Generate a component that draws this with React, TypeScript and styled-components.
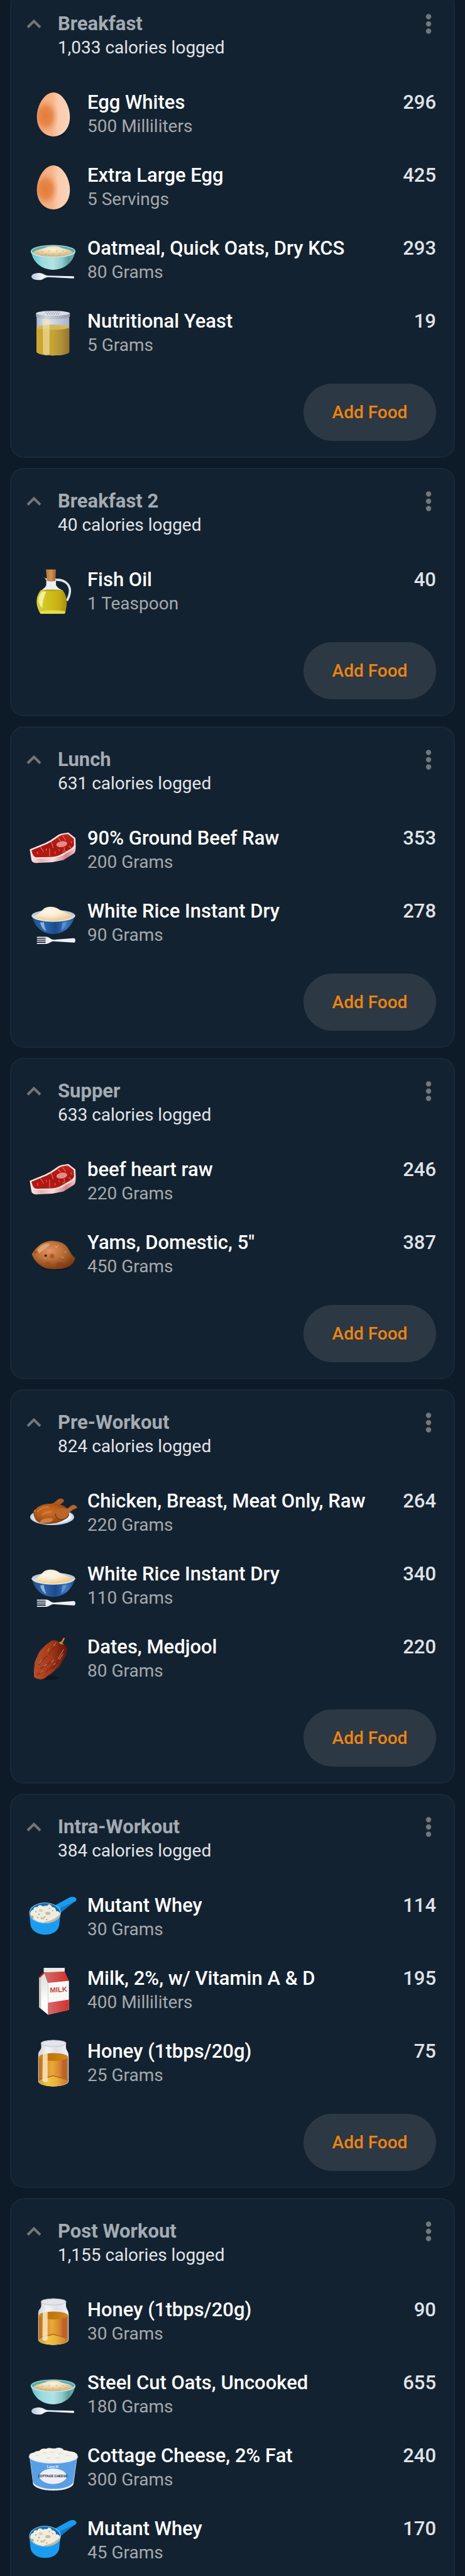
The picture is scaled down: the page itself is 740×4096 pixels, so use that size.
import React from "react";
import styled, { createGlobalStyle } from "styled-components";

const GlobalStyle = createGlobalStyle`
  *, *::before, *::after { box-sizing: border-box; }
  body {
    margin: 0;
    background: #0d1a28;
    color: #ffffff;
    font-family: Roboto, "Liberation Sans", sans-serif;
    font-size: 28px;
    line-height: 38px;
  }
`;

/* The diary is scrolled, so the first card starts just above the window. */
const Diary = styled.main`
  display: flex;
  flex-direction: column;
  gap: 16px;
  margin-top: -15px;
  padding: 0 16px;
`;

const Card = styled.section<{ $cut: boolean }>`
  display: flex;
  flex-direction: column;
  padding: 32px 0 ${p => (p.$cut ? 18 : 25)}px;
  background: #132230;
  border: 2px solid #182937;
  border-bottom-width: ${p => (p.$cut ? 0 : 2)}px;
  border-radius: ${p => (p.$cut ? "22px 22px 0 0" : "22px")};
`;

const CardHeader = styled.header`
  display: flex;
  align-items: flex-start;
  gap: 26px;
  padding: 0 35px 0 24px;
`;

const IconButton = styled.button`
  display: flex;
  align-items: center;
  height: 38px;
  padding: 0;
  border: 0;
  background: none;
  color: #72777a;
  cursor: pointer;
`;

const Heading = styled.div`
  flex: 1;
  min-width: 0;
`;

const MealTitle = styled.h2`
  margin: 0;
  font-size: 31px;
  font-weight: 700;
  color: #a3abb3;
`;

const MealTotal = styled.p`
  margin: 0;
  color: #e1e5ea;
`;

const FoodList = styled.ul`
  display: flex;
  flex-direction: column;
  gap: 40px;
  margin: 49px 0 0;
  padding: 0 28px 0 31px;
  list-style: none;
`;

const FoodRow = styled.li`
  display: flex;
  align-items: flex-start;
  gap: 18px;
  height: 76px;
`;

const FoodIcon = styled.svg`
  flex: none;
  align-self: center;
  width: 72px;
  height: 72px;
  overflow: visible;
`;

const FoodText = styled.div`
  flex: 1;
  min-width: 0;
`;

const FoodName = styled.h3`
  margin: 0;
  font-size: 31px;
  font-weight: 500;
`;

const FoodAmount = styled.p`
  margin: 0;
  color: #a5a9ad;
`;

const FoodCalories = styled.span`
  font-size: 31px;
  font-weight: 500;
  color: #dfe3e9;
`;

const AddFoodButton = styled.button`
  align-self: flex-end;
  width: 211px;
  height: 91px;
  margin: 42px 28px 0 0;
  padding: 0;
  border: 0;
  border-radius: 46px;
  background: #2c3843;
  color: #f08412;
  font-family: inherit;
  font-size: 28px;
  font-weight: 500;
  line-height: 38px;
  cursor: pointer;
`;

const SharedDefs = styled.svg`
  display: block;
  width: 0;
  height: 0;
`;

type Stop = [number, string, number?];

const Linear = ({ id, stops, down }: { id: string; stops: Stop[]; down?: boolean }) => (
  <linearGradient id={id} x1="0" y1="0" x2={down ? "0" : "1"} y2={down ? "1" : "0"}>
    {stops.map(([at, color, opacity = 1]) => (
      <stop key={at} offset={at} stopColor={color} stopOpacity={opacity} />
    ))}
  </linearGradient>
);

const Radial = ({ id, cx, cy, r, stops }: { id: string; cx: number; cy: number; r: number; stops: Stop[] }) => (
  <radialGradient id={id} cx={cx} cy={cy} r={r}>
    {stops.map(([at, color, opacity = 1]) => (
      <stop key={at} offset={at} stopColor={color} stopOpacity={opacity} />
    ))}
  </radialGradient>
);

const Gradients = () => (
  <SharedDefs aria-hidden="true">
    <defs>
      <Linear id="eggBase" stops={[[0, "#f4a877"], [0.45, "#f6b488"], [0.65, "#facbae"], [1, "#fbd3ba"]]} />
      <Radial id="eggShade" cx={0.26} cy={0.54} r={0.4} stops={[[0, "#e27c36"], [0.5, "#e58445", 0.9], [1, "#f2a271", 0]]} />
      <Linear id="bowlTeal" stops={[[0, "#5fc3cf"], [0.25, "#9adbe0"], [0.5, "#b4e2e4"], [0.7, "#8fcccd"], [0.85, "#5b9f9d"], [1, "#6db3b3"]]} />
      <Radial id="oats" cx={0.5} cy={0.3} r={0.6} stops={[[0, "#fbf3d8"], [0.45, "#f1dfb8"], [1, "#d6b98a"]]} />
      <Linear id="silver" stops={[[0, "#b9c6dc"], [0.25, "#f2f6fc"], [0.5, "#dfe6f3"], [1, "#f4f6fb"]]} />
      <Linear id="lid" stops={[[0, "#9ba3b0"], [0.3, "#d0d4dc"], [1, "#9298a3"]]} />
      <Linear id="glass" stops={[[0, "#a8b7d0"], [0.3, "#dfe6f2"], [1, "#a9b4cb"]]} />
      <Linear id="yeast" stops={[[0, "#cfa72c"], [0.5, "#c4a433"], [0.75, "#b0913a"], [1, "#98742a"]]} />
      <Linear id="oil" stops={[[0, "#d6ce3a"], [0.4, "#d0c01c"], [0.75, "#c5ad12"], [1, "#a48f12"]]} />
      <Linear id="cork" stops={[[0, "#b37538"], [0.5, "#d29456"], [1, "#9c5f2a"]]} />
      <Linear id="meat" down stops={[[0, "#c0241c"], [0.5, "#ab1810"], [1, "#b31a12"]]} />
      <Linear id="fat" stops={[[0, "#fbeaea"], [0.25, "#e6b3b3"], [0.5, "#f6dcdc"], [0.8, "#d08489"], [1, "#f3c9cb"]]} />
      <Linear id="bowlBlue" stops={[[0, "#1e4f8c"], [0.3, "#2d67ab"], [0.55, "#1b4a8a"], [0.8, "#3a76bf"], [1, "#1f5192"]]} />
      <Radial id="rice" cx={0.4} cy={0.35} r={0.65} stops={[[0, "#fbf6ee"], [0.45, "#f9ecd2"], [1, "#efc987"]]} />
      <Radial id="yam" cx={0.4} cy={0.35} r={0.65} stops={[[0, "#e2955f"], [0.5, "#bb6e36"], [1, "#7d3d12"]]} />
      <Radial id="roast" cx={0.42} cy={0.4} r={0.6} stops={[[0, "#cb6f28"], [0.5, "#b85c1b"], [1, "#8a4314"]]} />
      <Linear id="date" stops={[[0, "#b84e28"], [0.5, "#a43a1a"], [1, "#5e150b"]]} />
      <Linear id="carton" stops={[[0, "#d66b6c"], [1, "#d2302b"]]} />
      <Linear id="cartonSide" down stops={[[0, "#d9dcd8"], [0.6, "#fafbfa"], [1, "#ffffff"]]} />
      <Linear id="honey" stops={[[0, "#bb6a1a"], [0.2, "#d98f28"], [0.45, "#e9a83a"], [0.7, "#d58a2c"], [0.85, "#bf5c33"], [1, "#b5702a"]]} />
      <Linear id="honeyTop" stops={[[0, "#cf8a14"], [0.4, "#c27609"], [1, "#cd8a20"]]} />
      <Linear id="honeyBase" stops={[[0, "#d99a2c"], [0.3, "#f3c444"], [0.6, "#e9b03c"], [1, "#c4752c"]]} />
      <Linear id="jar" stops={[[0, "#cfd2dc"], [0.3, "#f3f3f6"], [0.6, "#dfe0e8"], [1, "#f1f1f5"]]} />
    </defs>
  </SharedDefs>
);

const eggShape = "M70 2C98 2 121 42 121 78C121 112 100 138 70 138C40 138 19 112 19 78C19 42 42 2 70 2Z";

const Egg = () => (
  <>
    <ellipse cx="72" cy="130" rx="36" ry="9" fill="#0a141e" opacity="0.5" />
    <path d={eggShape} fill="url(#eggBase)" />
    <path d={eggShape} fill="url(#eggShade)" />
  </>
);

const Oatmeal = () => (
  <>
    <path d="M1 43C6 76 34 99 69 99C104 99 132 76 137 43Z" fill="url(#bowlTeal)" />
    <ellipse cx="69" cy="42" rx="68" ry="18" fill="#5fa9ad" stroke="#8fd3d8" strokeWidth="3" />
    <path d="M6 47C14 36 34 36 46 30C60 24 84 24 94 31C108 36 124 36 131 47C118 63 20 63 6 47Z" fill="url(#oats)" />
    <path d="M20 46l5 2m8-6l5 3m6 7l6-1m4-11l5 2m8 9l5-2m6-9l5 3m5 7l6-2m3-8l5 3m4 4l5-1M30 52l5 1m20 1l5 1m22 0l6-1" stroke="#c8a873" strokeWidth="2" />
    <path d="M1 43C12 66 126 66 137 43" fill="none" stroke="#bfe9ea" strokeWidth="3" />
    <path d="M2 120C2 113 14 109 26 109C38 109 42 117 54 117L132 119C135 119 135 126 132 126L54 122C42 122 38 131 26 131C12 131 2 127 2 120Z" fill="url(#silver)" />
  </>
);

const Shaker = () => (
  <>
    <path d="M18 18H119V128C112 142 25 142 18 128Z" fill="url(#glass)" />
    <path d="M18 51H119V128C112 142 25 142 18 128Z" fill="url(#yeast)" />
    <ellipse cx="68.5" cy="51" rx="50.5" ry="8" fill="#d2b85c" />
    <path d="M37 26H58V132C54 137 43 137 38 133Z" fill="#f3e4b0" opacity="0.6" />
    <path d="M16 8H121V18C114 29 23 29 16 18Z" fill="url(#lid)" />
    <ellipse cx="68.5" cy="8" rx="52.5" ry="7.5" fill="#d9dee8" />
    <path d="M46 5h44M50 10h40" stroke="#8d95a2" strokeWidth="3" strokeDasharray="3 4" />
  </>
);

const OilBottle = () => (
  <>
    <path d="M78 33C98 31 118 42 121 62C123 78 116 88 112 98" fill="none" stroke="#dfe4ea" strokeWidth="7" />
    <path d="M38 22L48 34V60H78V28H44Z" fill="#e6eaf0" />
    <path d="M50 36H76C76 56 86 58 98 66H32C42 58 50 54 50 36Z" fill="#eceff4" />
    <path d="M31 65H99C112 84 116 104 105 138H30C12 108 16 84 31 65Z" fill="url(#oil)" />
    <path d="M31 65Q65 72 99 65Q65 60 31 65Z" fill="#b9a914" />
    <path d="M36 68C20 86 20 106 36 120C36 104 40 84 48 70Z" fill="#f6f3ae" opacity="0.9" />
    <path d="M28 130Q65 124 108 130L105 138H30Z" fill="#ece35a" opacity="0.8" />
    <path d="M47 1H78L76 36C68 39 57 39 50 36Z" fill="url(#cork)" />
  </>
);

const Steak = () => (
  <>
    <path d="M-3 68L2 100C5 108 12 110 26 109L66 107L101 100L134 79C139 75 139 66 139 56Z" fill="url(#fat)" />
    <path d="M-3 67L29 54C52 46 66 36 86 22C96 17 106 17 116 15L138 32L139 56C137 64 131 67 124 71L97 87C84 93 70 94 57 95L14 96C4 94 0 84 -3 67Z" fill="#fce5e4" />
    <path d="M2 70L32 58C55 50 70 40 89 26C98 21 106 21 115 20L133 34L134 54C132 60 127 63 121 67L95 82C82 89 70 90 57 91L17 92C8 90 5 82 2 70Z" fill="url(#meat)" />
    <ellipse cx="96" cy="51" rx="17" ry="9" fill="#e58a86" transform="rotate(-10 96 51)" />
    <path d="M29 59C32 66 40 68 39 76M59 90C55 80 62 74 57 64M63 42C65 50 68 54 69 62M98 25C103 31 106 34 108 40M103 60C102 68 108 72 106 80M118 56L127 66M84 32L93 41M21 74v8M48 64v7M75 74v7M86 66l3 5M100 70v6M124 42l3 6" fill="none" stroke="#e87a6e" strokeWidth="2" />
  </>
);

const Rice = () => (
  <>
    <path d="M3 45C10 80 36 103 69 103C102 103 129 80 137 45Z" fill="url(#bowlBlue)" />
    <ellipse cx="70" cy="46" rx="67" ry="17" fill="#b7cbe0" />
    <path d="M6 50C20 44 30 36 38 27C48 17 70 17 82 24C98 34 122 42 133 48C118 68 24 68 6 50Z" fill="url(#rice)" />
    <path d="M3 46C12 70 126 70 137 46" fill="none" stroke="#e8eef4" strokeWidth="3" />
    <path d="M29 68L40 66C42 78 44 86 48 94C38 90 32 80 29 68Z" fill="#bcd3ec" opacity="0.7" />
    <path d="M98 68L110 66C108 78 102 88 94 93Z" fill="#6ba1de" opacity="0.7" />
    <path d="M19 112H48C58 113 60 120 70 121L132 116C140 115 140 131 132 130L70 126C60 127 58 133 48 134H19V131H46V127H19V124H46V121H19V118H46V115H19Z" fill="#eef0f6" />
  </>
);

const Yam = () => (
  <>
    <ellipse cx="75" cy="110" rx="42" ry="9" fill="#08121b" opacity="0.6" />
    <path d="M3 68C20 42 38 28 64 27C88 27 104 34 114 48C122 62 128 74 138 80C134 96 122 106 108 111C86 117 62 116 45 112C24 102 10 88 3 68Z" fill="url(#yam)" />
    <path d="M20 56C30 40 46 34 60 36C54 46 40 54 26 66Z" fill="#efc3a0" opacity="0.55" />
    <circle cx="66" cy="74" r="7" fill="#9a4520" opacity="0.6" />
    <ellipse cx="90" cy="101" rx="12" ry="8" fill="#8f3c18" opacity="0.65" />
    <ellipse cx="53" cy="98" rx="9" ry="7" fill="#a8481f" opacity="0.6" />
    <ellipse cx="14" cy="62" rx="6" ry="6" fill="#b0431b" opacity="0.6" />
    <circle cx="46" cy="73" r="4" fill="#4a2210" />
    <path d="M74 42l6 6l4-8M96 76l6 4M40 80l6 3M104 60l6 3" fill="none" stroke="#e8a878" strokeWidth="2" />
  </>
);

const Chicken = () => (
  <>
    <ellipse cx="66" cy="82" rx="68" ry="25" fill="#c9d8e8" />
    <ellipse cx="66" cy="81" rx="60" ry="20" fill="#eef3f8" />
    <path d="M60 42C76 40 80 28 88 26C98 22 104 28 102 35C96 38 92 44 84 50Z" fill="#a85c2a" />
    <path d="M8 68C14 54 30 44 48 42C72 38 98 42 108 52C122 62 122 78 104 90C86 102 60 105 34 102C18 98 8 86 8 68Z" fill="url(#roast)" />
    <path d="M76 72C78 56 94 52 112 56C122 52 124 44 133 44C138 46 143 48 143 54C134 58 126 60 119 70C116 86 104 90 92 90C82 88 76 82 76 72Z" fill="#b9652c" />
    <path d="M76 72C76 80 82 88 92 90C104 90 114 86 118 74" fill="none" stroke="#7d3c14" strokeWidth="3" />
    <path d="M28 98C32 88 48 84 66 86C72 90 66 96 58 98L30 102Z" fill="#cc8142" />
    <path d="M20 66C30 54 44 50 56 50M34 76C44 68 54 66 64 66" fill="none" stroke="#e29144" strokeWidth="4" opacity="0.6" />
    <path d="M8 62l8-2l-4 8z" fill="#b98142" />
  </>
);

const DateFruit = () => (
  <>
    <ellipse cx="56" cy="128" rx="30" ry="7" fill="#08121b" opacity="0.6" />
    <path d="M10 119C8 104 12 96 12 80C20 62 24 50 32 41C42 30 52 20 62 15C70 10 82 12 92 21C102 22 112 30 113 41C112 56 106 64 98 76C92 88 88 94 78 101C68 112 60 116 48 125C42 132 36 132 31 133C24 132 18 131 13 128C10 126 9 122 10 119Z" fill="url(#date)" />
    <path d="M90 17L98 20C102 16 102 10 106 6L102 4C98 8 98 12 94 16L86 18L92 24L102 25L98 20" fill="#c68a34" />
    <path d="M24 88C34 78 40 66 52 60M30 100C42 90 54 88 62 76M44 112C58 102 64 96 74 84M56 56C62 46 68 40 74 30M18 120C26 112 30 114 38 108M64 100C74 92 80 84 84 74" fill="none" stroke="#6b200f" strokeWidth="4" opacity="0.45" />
    <path d="M26 84l8-12M52 46l5-9M70 30l8-10M40 92l10-6M64 80l8-8M70 88l6-5M84 70l18-30M88 72l12-18M30 112l8-5" fill="none" stroke="#e79a80" strokeWidth="2" opacity="0.75" />
  </>
);

const Scoop = () => (
  <>
    <path d="M72 34L120 8C128 4 138 5 141 12C142 17 139 20 134 22L90 56Z" fill="#1a9bf0" />
    <path d="M92 40L134 21L92 56Z" fill="#1578c4" />
    <path d="M-4 56C-4 66 -2 76 -1 92C2 112 22 123 44 123C68 123 86 112 88 92L92 56Z" fill="#1c9cf0" />
    <ellipse cx="44" cy="56" rx="48" ry="31" fill="#136fae" stroke="#8fc9f0" strokeWidth="2" />
    <path d="M-2 58C0 50 2 46 8 46C8 38 14 36 20 38C24 30 32 30 37 36C42 32 48 34 52 33C56 26 62 30 66 38C74 36 78 44 78 50C86 50 90 54 91 58C88 76 68 86 44 86C20 86 2 76 -2 58Z" fill="#efece0" />
    <path d="M40 84C60 82 76 74 90 60C86 78 66 87 44 86Z" fill="#c9b795" />
    <ellipse cx="53" cy="57" rx="8" ry="5" fill="#c9bd9f" />
    <ellipse cx="31" cy="48" rx="6" ry="4" fill="#d6cdb3" />
    <ellipse cx="36" cy="72" rx="7" ry="4" fill="#d3c7a9" />
    <ellipse cx="5" cy="68" rx="4" ry="4" fill="#b9a77e" />
    <path d="M14 52h3M24 60h3M42 68h3M56 42h3M66 48h3M20 70h3M48 77h3" stroke="#8d7a52" strokeWidth="3" />
  </>
);

const Milk = () => (
  <>
    <path d="M40 14V0H105V13Z" fill="#e9ebe8" />
    <path d="M26 30L42 15L53 46V145L26 122Z" fill="url(#cartonSide)" />
    <path d="M26 30L32 26V127L26 122Z" fill="#cfcbbf" />
    <path d="M26 26L40 12L42 17L28 31Z" fill="#b41616" />
    <path d="M42 14L105 11L118 40L53 46Z" fill="url(#carton)" />
    <path d="M53 46L118 40V130L53 145Z" fill="#f8f8f7" />
    <path d="M53 108L118 98V130L53 145Z" fill="url(#carton)" />
    <text x="86" y="75" fill="#cf3f3f" fontFamily="Liberation Sans, Arial, sans-serif" fontSize="22" fontWeight="700" textAnchor="middle" transform="rotate(-4 86 68)">MILK</text>
  </>
);

const HoneyJar = () => (
  <>
    <path d="M32 8C32 20 34 22 28 30C24 34 23 38 23 46V127C32 146 108 146 117 127V46C117 38 114 34 112 30C108 22 109 20 109 8Z" fill="url(#jar)" />
    <ellipse cx="70.5" cy="8" rx="38.5" ry="10" fill="#e3e4ec" stroke="#c3c6d0" strokeWidth="2" />
    <path d="M25 50H115V127C104 145 36 145 25 127Z" fill="url(#honey)" />
    <ellipse cx="70" cy="50" rx="45" ry="12" fill="url(#honeyTop)" />
    <path d="M25 124C34 114 56 114 66 108C76 108 90 114 115 122V127C104 145 36 145 25 127Z" fill="url(#honeyBase)" />
    <path d="M25 122C40 112 56 114 68 108C80 110 96 116 115 121" fill="none" stroke="#b5691a" strokeWidth="3" />
    <path d="M37 38H52V122C52 130 37 130 36 122Z" fill="#fbeccd" opacity="0.8" />
  </>
);

const CottageCheese = () => (
  <>
    <path d="M-4 34L7 120C18 147 122 147 132 120L144 34Z" fill="#e9ecfb" />
    <path d="M-2 42L7 114C20 142 120 142 131 114L142 42Z" fill="#5a9fe3" />
    <path d="M-5 34C-5 26 2 24 10 23C16 16 24 20 28 16C36 8 44 12 48 11C58 6 66 12 76 10C86 6 98 8 102 15C112 16 122 20 128 20C138 22 145 27 145 34C138 60 2 60 -5 34Z" fill="#f3f2ea" />
    <path d="M14 34q6-7 12 0M36 26q6-7 12 0M60 24q6-7 12 0M86 28q6-7 12 0M108 34q6-7 12 0M48 42q6-7 12 0M76 42q6-7 12 0" fill="none" stroke="#d8d6c6" strokeWidth="2" />
    <path d="M-5 35C4 61 136 61 145 35" fill="none" stroke="#e9ecfb" strokeWidth="4" />
    <ellipse cx="69" cy="96" rx="42" ry="24" fill="#eceefb" />
    <text x="68" y="70" fill="#ffffff" fontFamily="Liberation Sans, Arial, sans-serif" fontSize="10" fontWeight="700" textAnchor="middle">Lose It!</text>
    <text x="68" y="100" fill="#10131a" fontFamily="Liberation Sans, Arial, sans-serif" fontSize="10" fontWeight="700" textAnchor="middle">COTTAGE CHEESE</text>
  </>
);

const foodArt = {
  egg: Egg,
  oatmeal: Oatmeal,
  shaker: Shaker,
  oil: OilBottle,
  steak: Steak,
  rice: Rice,
  yam: Yam,
  chicken: Chicken,
  date: DateFruit,
  scoop: Scoop,
  milk: Milk,
  honey: HoneyJar,
  cottage: CottageCheese,
};

interface Food {
  art: keyof typeof foodArt;
  name: string;
  amount: string;
  calories: number;
}

interface Meal {
  title: string;
  total: string;
  foods: Food[];
}

const food = (art: Food["art"], name: string, amount: string, calories: number): Food => ({ art, name, amount, calories });

const meals: Meal[] = [
  {
    title: "Breakfast",
    total: "1,033",
    foods: [
      food("egg", "Egg Whites", "500 Milliliters", 296),
      food("egg", "Extra Large Egg", "5 Servings", 425),
      food("oatmeal", "Oatmeal, Quick Oats, Dry KCS", "80 Grams", 293),
      food("shaker", "Nutritional Yeast", "5 Grams", 19),
    ],
  },
  { title: "Breakfast 2", total: "40", foods: [food("oil", "Fish Oil", "1 Teaspoon", 40)] },
  {
    title: "Lunch",
    total: "631",
    foods: [
      food("steak", "90% Ground Beef Raw", "200 Grams", 353),
      food("rice", "White Rice Instant Dry", "90 Grams", 278),
    ],
  },
  {
    title: "Supper",
    total: "633",
    foods: [
      food("steak", "beef heart raw", "220 Grams", 246),
      food("yam", "Yams, Domestic, 5\"", "450 Grams", 387),
    ],
  },
  {
    title: "Pre-Workout",
    total: "824",
    foods: [
      food("chicken", "Chicken, Breast, Meat Only, Raw", "220 Grams", 264),
      food("rice", "White Rice Instant Dry", "110 Grams", 340),
      food("date", "Dates, Medjool", "80 Grams", 220),
    ],
  },
  {
    title: "Intra-Workout",
    total: "384",
    foods: [
      food("scoop", "Mutant Whey", "30 Grams", 114),
      food("milk", "Milk, 2%, w/ Vitamin A & D", "400 Milliliters", 195),
      food("honey", "Honey (1tbps/20g)", "25 Grams", 75),
    ],
  },
  {
    title: "Post Workout",
    total: "1,155",
    foods: [
      food("honey", "Honey (1tbps/20g)", "30 Grams", 90),
      food("oatmeal", "Steel Cut Oats, Uncooked", "180 Grams", 655),
      food("cottage", "Cottage Cheese, 2% Fat", "300 Grams", 240),
      food("scoop", "Mutant Whey", "45 Grams", 170),
    ],
  },
];

const Chevron = () => (
  <svg width="24" height="16" viewBox="0 0 24 16" aria-hidden="true">
    <path d="M2 13.5L12 3.5L22 13.5" fill="none" stroke="currentColor" strokeWidth="4" />
  </svg>
);

const Dots = () => (
  <svg width="10" height="32" viewBox="0 0 10 32" aria-hidden="true" fill="currentColor">
    <circle cx="5" cy="4.5" r="4.2" />
    <circle cx="5" cy="16" r="4.2" />
    <circle cx="5" cy="27.5" r="4.2" />
  </svg>
);

const FoodEntry = ({ art, name, amount, calories }: Food) => {
  const Art = foodArt[art];
  return (
    <FoodRow>
      <FoodIcon viewBox="0 0 140 140" aria-hidden="true">
        <Art />
      </FoodIcon>
      <FoodText>
        <FoodName>{name}</FoodName>
        <FoodAmount>{amount}</FoodAmount>
      </FoodText>
      <FoodCalories>{calories}</FoodCalories>
    </FoodRow>
  );
};

const MealCard = ({ meal, cut }: { meal: Meal; cut: boolean }) => (
  <Card $cut={cut}>
    <CardHeader>
      <IconButton type="button" aria-label={`Collapse ${meal.title}`}>
        <Chevron />
      </IconButton>
      <Heading>
        <MealTitle>{meal.title}</MealTitle>
        <MealTotal>{meal.total} calories logged</MealTotal>
      </Heading>
      <IconButton type="button" aria-label={`${meal.title} options`}>
        <Dots />
      </IconButton>
    </CardHeader>
    <FoodList>
      {meal.foods.map(item => (
        <FoodEntry key={item.name} {...item} />
      ))}
    </FoodList>
    {!cut && <AddFoodButton type="button">Add Food</AddFoodButton>}
  </Card>
);

export default function App() {
  return (
    <>
      <GlobalStyle />
      <Diary>
        {meals.map((meal, index) => (
          <MealCard key={meal.title} meal={meal} cut={index === meals.length - 1} />
        ))}
      </Diary>
      <Gradients />
    </>
  );
}
